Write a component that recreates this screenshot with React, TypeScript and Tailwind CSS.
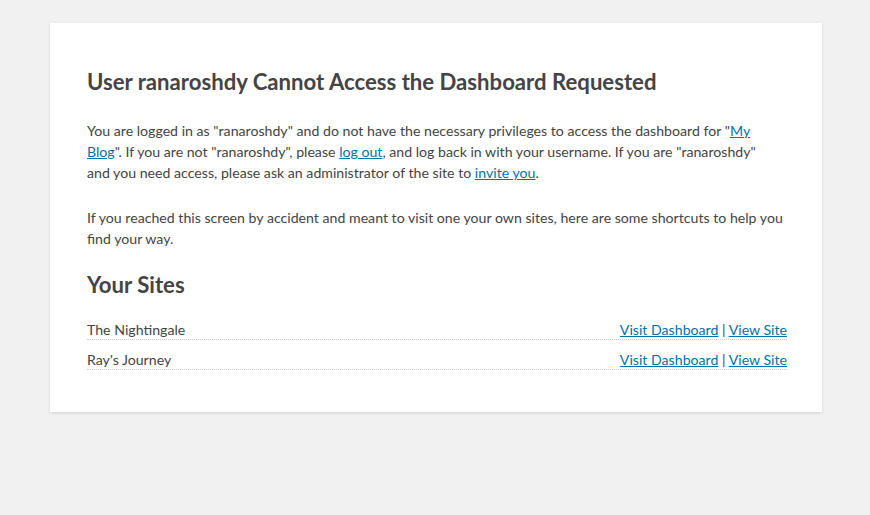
export default function App() {
  const sites = ["The Nightingale", "Ray's Journey"];
  return (
    <div className="min-h-[515px] bg-[#f1f1f1] pt-[23px] font-['Lato',sans-serif] text-[#444]">
      <div className="ml-[50px] w-[772px] bg-white pb-[42px] pl-[37px] pr-[35px] pt-[44px] shadow-[0_1px_3px_rgba(0,0,0,0.13)]">
        <h1 className="text-[22.15px] font-bold leading-[30px]">
          User ranaroshdy Cannot Access the Dashboard Requested
        </h1>
        <p className="mt-[23px] max-w-[688px] text-[14.15px] leading-[21px]">
          You are logged in as "ranaroshdy" and do not have the necessary privileges to access the dashboard for "
          <a href="#" className="text-[#0073aa] underline">My Blog</a>
          ". If you are not "ranaroshdy", please{" "}
          <a href="#" className="text-[#0073aa] underline">log out</a>, and log back in with your username. If you
          are "ranaroshdy" and you need access, please ask an administrator of the site to{" "}
          <a href="#" className="text-[#0073aa] underline">invite you</a>.
        </p>
        <p className="mt-[24px] text-[14.15px] leading-[21px]">
          If you reached this screen by accident and meant to visit one your own sites, here are some shortcuts to
          help you find your way.
        </p>
        <h2 className="mt-[21px] text-[22.15px] font-bold leading-[30px]">Your Sites</h2>
        <ul className="mt-[10px] text-[14.15px]">
          {sites.map((s) => (
            <li
              key={s}
              className="flex justify-between border-b border-dotted border-[#ccc] pt-[10px] leading-[19px]"
            >
              <span>{s}</span>
              <span>
                <a href="#" className="text-[#0073aa] underline">Visit Dashboard</a> |{" "}
                <a href="#" className="text-[#0073aa] underline">View Site</a>
              </span>
            </li>
          ))}
        </ul>
      </div>
    </div>
  );
}
